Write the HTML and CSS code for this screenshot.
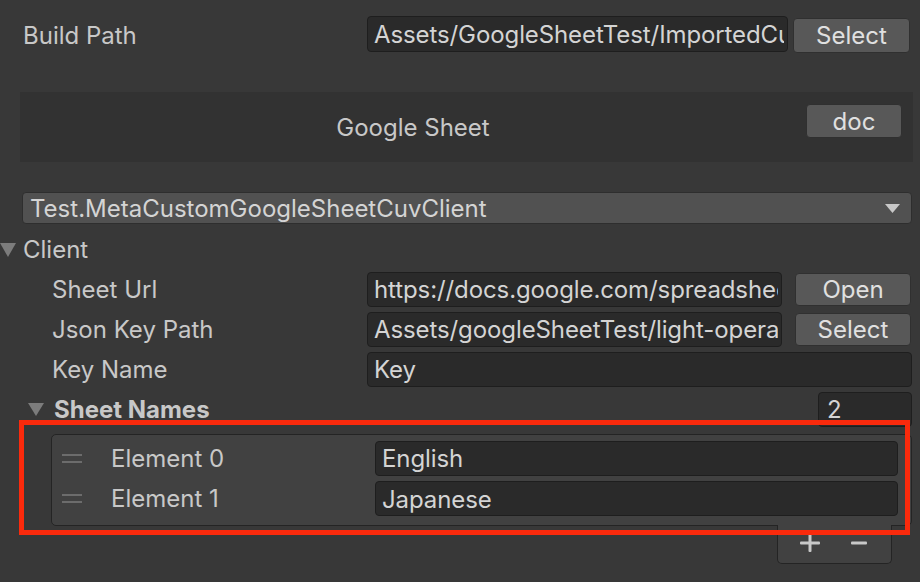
FILE: index.html
```html
<!DOCTYPE html>
<html>
<head>
<meta charset="utf-8">
<link rel="stylesheet" href="styles.css">
</head>
<body>
<div class="inspector">
  <div class="row row-build">
    <span class="label label-top">Build Path</span>
    <div class="field field-build"><span class="field-text">Assets/GoogleSheetTest/ImportedCu</span></div>
    <button class="btn btn-build">Select</button>
  </div>

  <div class="section">
    <span class="section-title">Google Sheet</span>
    <button class="btn btn-doc">doc</button>
  </div>

  <div class="dropdown">
    <span class="dropdown-text">Test.MetaCustomGoogleSheetCuvClient</span>
    <svg class="dropdown-arrow" width="15" height="9" viewBox="0 0 15 9"><polygon points="0,0 15,0 7.5,9" fill="#c8c8c8"/></svg>
  </div>

  <div class="foldout foldout-client">
    <svg class="fold-arrow" width="16" height="14" viewBox="0 0 16 14"><polygon points="0,0 16,0 8,14" fill="#7c7c7c"/></svg>
    <span class="label">Client</span>
  </div>

  <div class="prop">
    <span class="label prop-label">Sheet Url</span>
    <div class="field field-mid"><span class="field-text">https://docs.google.com/spreadshee</span></div>
    <button class="btn btn-side">Open</button>
  </div>
  <div class="prop">
    <span class="label prop-label">Json Key Path</span>
    <div class="field field-mid"><span class="field-text">Assets/googleSheetTest/light-opera</span></div>
    <button class="btn btn-side">Select</button>
  </div>
  <div class="prop">
    <span class="label prop-label">Key Name</span>
    <div class="field field-wide"><span class="field-text">Key</span></div>
  </div>
  <div class="prop prop-names">
    <svg class="fold-arrow-small" width="16" height="13" viewBox="0 0 16 13"><polygon points="0,0 16,0 8,13" fill="#7c7c7c"/></svg>
    <span class="label label-bold">Sheet Names</span>
    <div class="field field-size"><span class="field-text">2</span></div>
  </div>

  <div class="list">
    <div class="list-row">
      <span class="handle"><i></i><i></i></span>
      <span class="label elem-label">Element 0</span>
      <div class="field field-elem"><span class="field-text">English</span></div>
    </div>
    <div class="list-row">
      <span class="handle"><i></i><i></i></span>
      <span class="label elem-label">Element 1</span>
      <div class="field field-elem"><span class="field-text">Japanese</span></div>
    </div>
  </div>
  <div class="list-footer-wrap">
    <div class="list-footer">
      <svg width="20" height="18" viewBox="0 0 20 18"><rect x="0" y="7.5" width="20" height="3" rx="1" fill="#c8c8c8"/><rect x="8.5" y="0" width="3" height="18" rx="1" fill="#c8c8c8"/></svg>
      <svg width="16" height="4" viewBox="0 0 16 4"><rect x="0" y="0.5" width="16" height="3" rx="1" fill="#c8c8c8"/></svg>
    </div>
  </div>

  <div class="highlight"></div>
</div>
</body>
</html>
```
FILE: styles.css
```css
* { box-sizing: border-box; }
html, body {
  margin: 0;
  padding: 0;
  background: #383838;
  width: 920px;
  height: 582px;
  overflow: hidden;
}
body {
  font-family: Inter, "Noto Sans", sans-serif;
  font-size: 24px;
  color: #c8c8c8;
}
.inspector {
  position: relative;
  padding-top: 16px;
  height: 582px;
}
.row {
  display: flex;
  align-items: center;
}
.label {
  color: #c8c8c8;
  white-space: nowrap;
}
.field {
  background: #2a2a2a;
  border: 1px solid #1e1e1e;
  border-radius: 4px;
  color: #d4d4d4;
  white-space: nowrap;
  overflow: hidden;
  padding: 0 3px 0 6px;
  display: flex;
  align-items: center;
}
.field-text {
  display: block;
  overflow: hidden;
  white-space: nowrap;
  min-width: 0;
  max-width: 100%;
  padding-top: 1px;
  letter-spacing: -0.1px;
}
.btn {
  font-family: inherit;
  font-size: 24px;
  color: #e0e0e0;
  background: #585858;
  border: 1px solid #303030;
  border-radius: 4px;
  padding: 0;
  display: flex;
  align-items: center;
  justify-content: center;
}

/* Build path row */
.row-build {
  height: 36px;
  padding-left: 23px;
}
.label-top { width: 344px; padding-top: 2px; }
.field-build { width: 421px; height: 36px; }
.btn-build { width: 117px; height: 35px; margin-left: 5px; margin-top: 2px; }

/* Google sheet section */
.section {
  margin: 40px 7px 0 20px;
  height: 70px;
  background: #323232;
  display: flex;
  align-items: flex-start;
  padding-right: 11px;
}
.section-title {
  flex: 1;
  text-align: center;
  line-height: 72px;
  color: #c8c8c8;
}
.btn-doc { width: 96px; height: 34px; margin-top: 12px; }

/* Dropdown */
.dropdown {
  margin: 30px 8px 0 22px;
  height: 32px;
  background: #515151;
  border: 1px solid #2e2e2e;
  border-radius: 4px;
  display: flex;
  align-items: center;
  padding: 0 11px 0 7px;
  color: #d4d4d4;
}
.dropdown-text { flex: 1; white-space: nowrap; }
.dropdown-arrow { display: block; }

/* Foldouts */
.foldout {
  display: flex;
  align-items: center;
  height: 40px;
  margin-top: 5px;
}
.fold-arrow { margin-right: 7px; margin-top: 1px; display: block; }

.prop {
  display: flex;
  align-items: center;
  height: 40px;
  padding-left: 52px;
}
.prop-label { width: 315px; }
.field-mid { width: 415px; height: 35px; }
.btn-side { width: 116px; height: 33px; margin-left: 13px; }
.field-wide { width: 545px; height: 35px; }

.prop-names { padding-left: 28px; }
.fold-arrow-small { display: block; margin-right: 10px; margin-top: 1px; }
.label-bold { font-weight: 700; flex: 1; color: #c8c8c8; }
.field-size { width: 94px; height: 35px; margin-right: 8px; padding-left: 8px; }

/* List */
.list {
  margin: 5px 8px 0 51px;
  height: 92px;
  background: #414141;
  border: 1px solid #242424;
  border-radius: 5px;
  padding: 3px 13px 0 10px;
}
.list-row {
  display: flex;
  align-items: center;
  height: 40.5px;
}
.handle {
  width: 20px;
  display: flex;
  flex-direction: column;
  gap: 5px;
  margin-right: 29px;
}
.handle i {
  display: block;
  height: 2px;
  background: #6c6c6c;
}
.elem-label { width: 264px; }
.field-elem { flex: 1; height: 35px; }

.list-footer-wrap {
  display: flex;
  justify-content: flex-end;
  padding-right: 28px;
  margin-top: -1px;
}
.list-footer {
  width: 115px;
  height: 39px;
  background: #414141;
  border: 1px solid #242424;
  border-top: none;
  border-radius: 0 0 5px 5px;
  display: flex;
  align-items: center;
  justify-content: space-between;
  padding: 0 24px 2px 22px;
}
.list-footer svg { display: block; }

/* Annotation overlay */
.highlight {
  position: absolute;
  left: 19px;
  top: 420px;
  width: 891px;
  height: 115px;
  border: 5px solid #fa2a0c;
  pointer-events: none;
}
```
